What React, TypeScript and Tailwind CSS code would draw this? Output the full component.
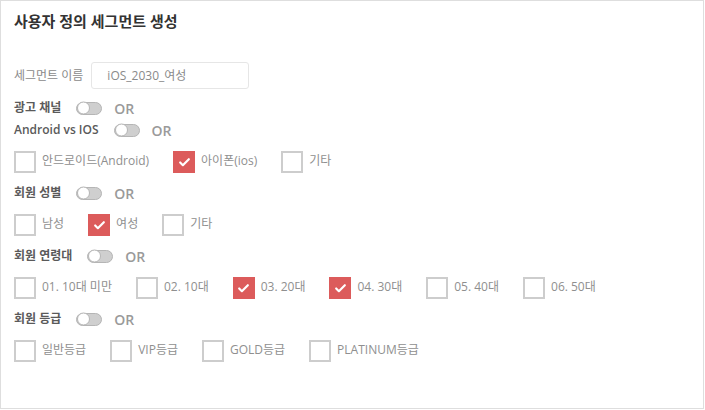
import { Check } from "lucide-react";

type Option = { label: string; checked?: boolean };

const groups: { title: string; options?: Option[] }[] = [
  { title: "광고 채널" },
  {
    title: "Android vs IOS",
    options: [
      { label: "안드로이드(Android)" },
      { label: "아이폰(ios)", checked: true },
      { label: "기타" },
    ],
  },
  {
    title: "회원 성별",
    options: [{ label: "남성" }, { label: "여성", checked: true }, { label: "기타" }],
  },
  {
    title: "회원 연령대",
    options: [
      { label: "01. 10대 미만" },
      { label: "02. 10대" },
      { label: "03. 20대", checked: true },
      { label: "04. 30대", checked: true },
      { label: "05. 40대" },
      { label: "06. 50대" },
    ],
  },
  {
    title: "회원 등급",
    options: [
      { label: "일반등급" },
      { label: "VIP등급" },
      { label: "GOLD등급" },
      { label: "PLATINUM등급" },
    ],
  },
];

function Toggle() {
  return (
    <div className="relative h-[13px] w-[26px] rounded-full border border-[#b5b5b5] bg-[#cfcfcf]">
      <div className="absolute left-0 top-1/2 h-[13px] w-[13px] -translate-y-1/2 rounded-full border border-[#b5b5b5] bg-white" />
    </div>
  );
}

function CheckItem({ label, checked }: Option) {
  return (
    <label className="mr-[24px] flex items-center">
      {checked ? (
        <span className="flex h-[22px] w-[22px] items-center justify-center bg-[#dc5b5b]">
          <Check size={13} strokeWidth={4} className="text-white" />
        </span>
      ) : (
        <span className="h-[22px] w-[22px] border-2 border-[#cdcdcd] bg-white" />
      )}
      <span className="ml-[6px] -mt-[3px] text-[12px] text-[#8f8f8f]">{label}</span>
    </label>
  );
}

export default function App() {
  return (
    <div className="h-[410px] w-[705px] bg-white font-['Open_Sans','Noto_Sans_CJK_KR',sans-serif]">
      <div className="h-[409px] w-[704px] border border-[#dedede] px-[13px]">
        <h1 className="mt-[9px] text-[15px] font-semibold leading-[22px] text-[#333]">
          사용자 정의 세그먼트 생성
        </h1>

        <div className="mt-[30px] flex items-center">
          <span className="text-[12px] text-[#8a8a8a]">세그먼트 이름</span>
          <div className="ml-[8px] flex h-[27px] w-[158px] items-center rounded-[3px] border border-[#e6e6e6] px-[15px] text-[12px] text-[#8a8a8a]">
            iOS_2030_여성
          </div>
        </div>

        <div className="mt-[8px] flex flex-col">
          {groups.map((g, i) => (
            <div key={g.title} className={i > 1 ? "mt-[9px]" : ""}>
              <div className="flex h-[22px] items-center">
                <span className="text-[12px] font-semibold text-[#5a5a5a]">{g.title}</span>
                <span className="ml-[15px]">
                  <Toggle />
                </span>
                <span className="ml-[12px] text-[14px] font-semibold text-[#9a9a9a]">OR</span>
              </div>
              {g.options && (
                <div className="mt-[10px] flex">
                  {g.options.map((o) => (
                    <CheckItem key={o.label} {...o} />
                  ))}
                </div>
              )}
            </div>
          ))}
        </div>
      </div>
    </div>
  );
}
